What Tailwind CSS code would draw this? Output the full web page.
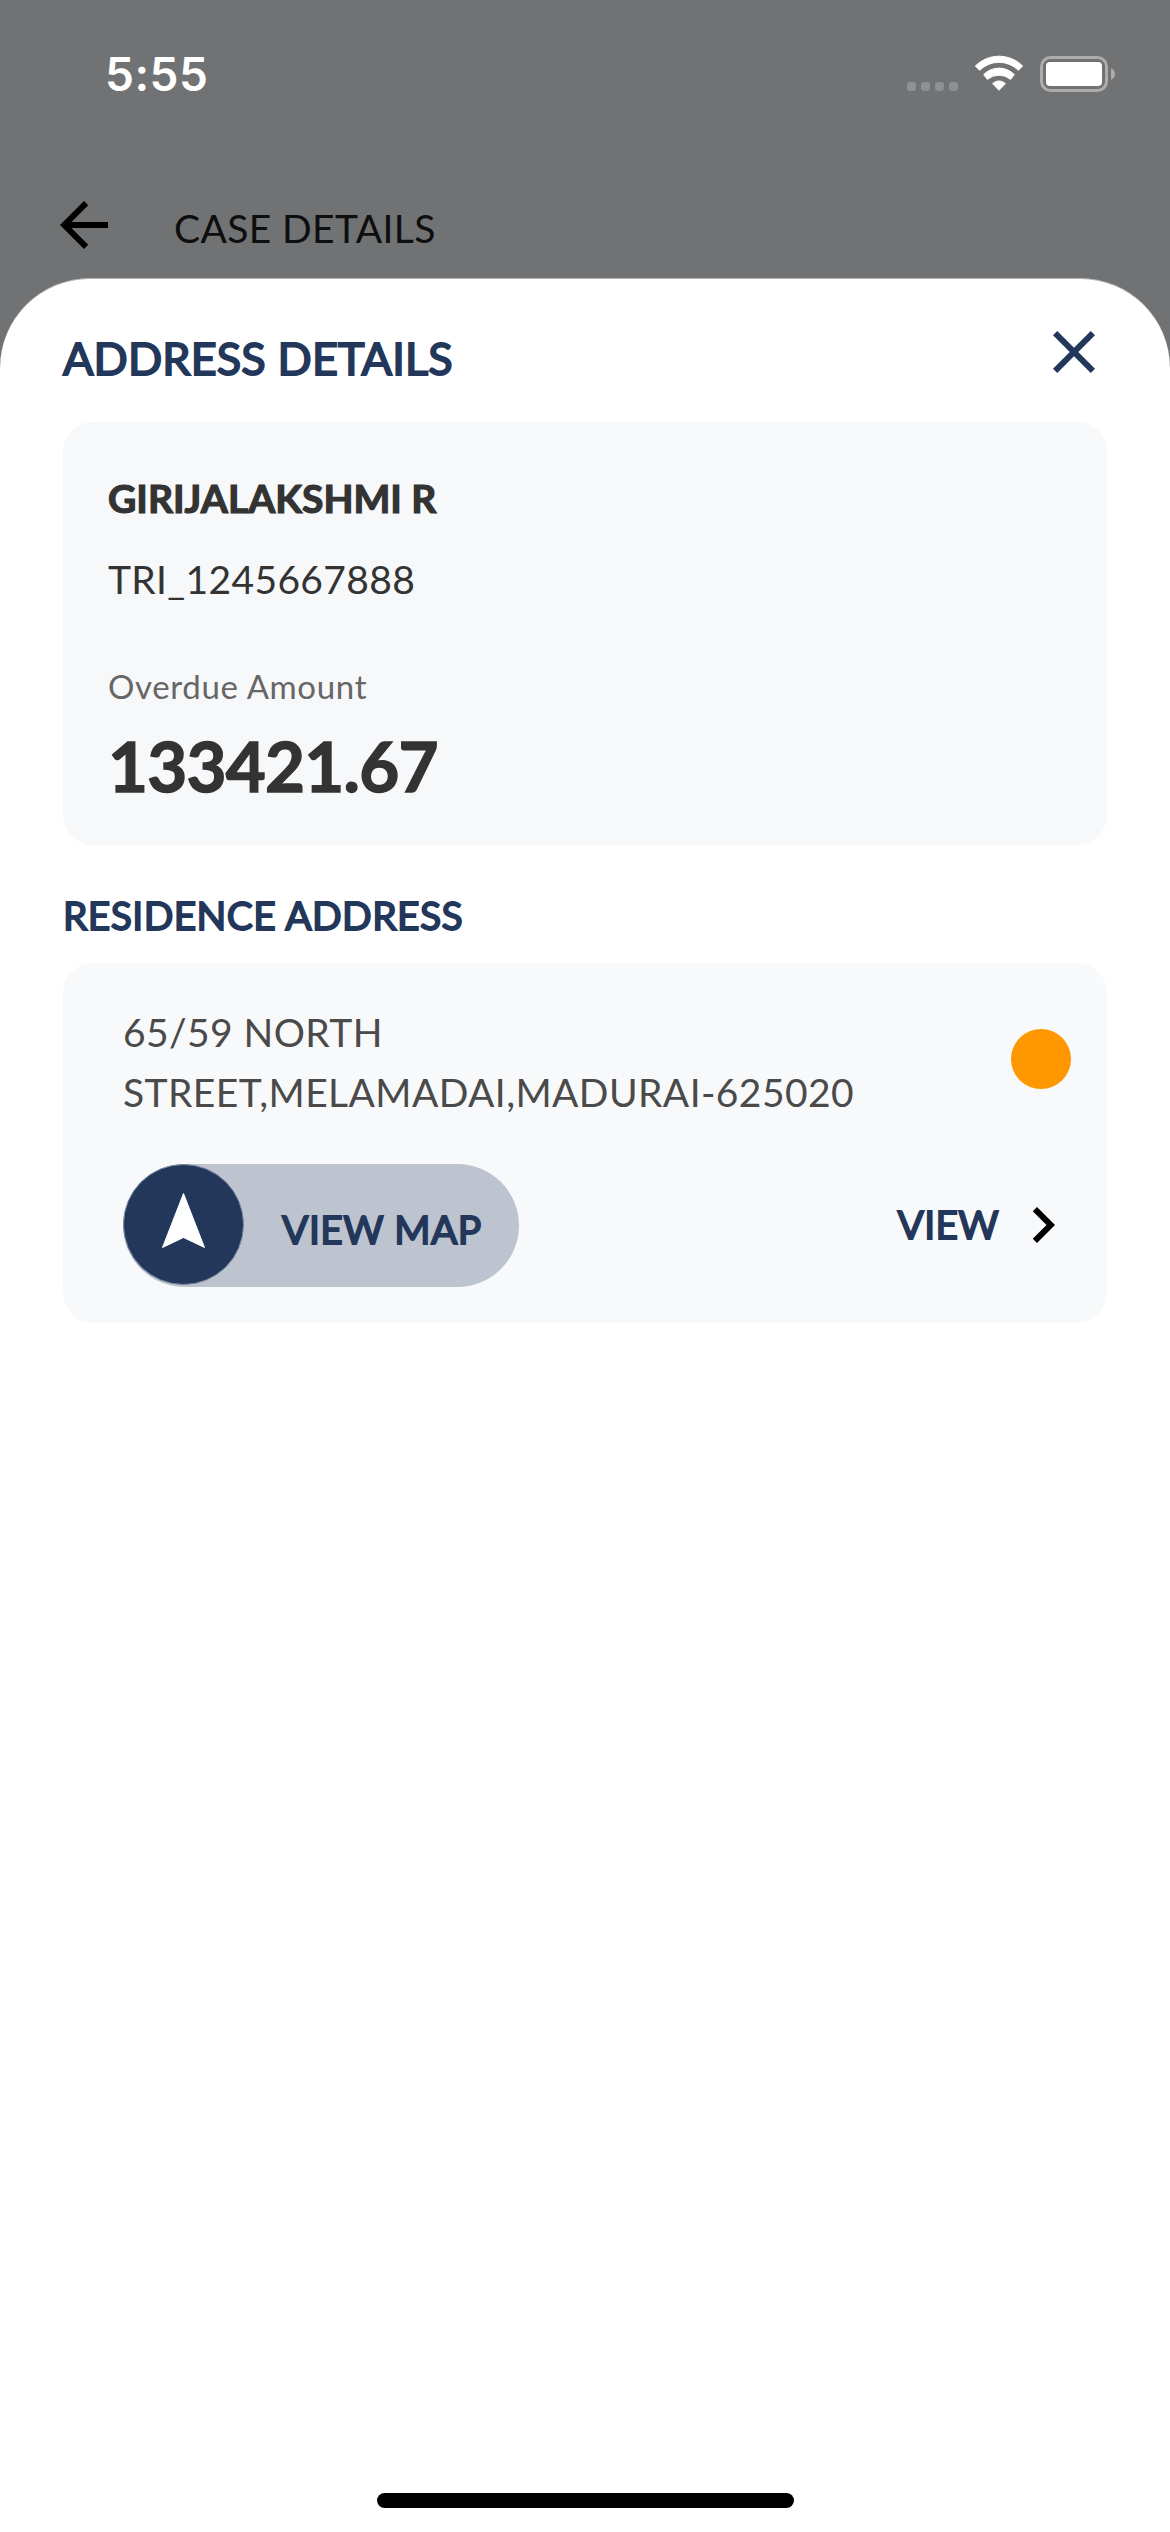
<!DOCTYPE html>
<html lang="en">
<head>
<meta charset="utf-8">
<title>Address Details</title>
<script src="https://cdn.jsdelivr.net/npm/@tailwindcss/browser@4"></script>
</head>
<body class="bg-[#717274]">
<div class="flex h-[2532px] w-[1170px] flex-col overflow-hidden bg-[#717274] font-['Lato',sans-serif]">

  <!-- Status bar -->
  <div class="flex h-[141px] shrink-0 items-start justify-between pl-[105px] pr-[54px]">
    <span class="mt-[44px] text-[46px] leading-[60px] font-semibold tracking-[0.5px] text-white font-['Inter',sans-serif]">5:55</span>
    <svg class="mt-[50px]" width="210" height="46" viewBox="906 50 210 46">
      <g fill="#8f9092">
        <rect x="907" y="82" width="9" height="9" rx="3"/><rect x="921" y="82" width="9" height="9" rx="3"/>
        <rect x="935" y="82" width="9" height="9" rx="3"/><rect x="949" y="82" width="9" height="9" rx="3"/>
      </g>
      <g fill="#fff" stroke="#fff" stroke-width="1" stroke-linejoin="round">
        <path d="M975.3 66A33.4 33.4 0 0 1 1022.7 66L1018.4 70.3A27.6 27.6 0 0 0 979.6 70.3Z"/>
        <path d="M983.7 74.6A21.3 21.3 0 0 1 1014.3 74.6L1010.6 79.4A18 18 0 0 0 987.4 79.4Z"/>
        <path d="M992.6 83.6A9 9 0 0 1 1005.4 83.6L999 90.3Z"/>
      </g>
      <rect x="1041.5" y="57.5" width="65" height="33" rx="9" fill="none" stroke="#acacac" stroke-width="3"/>
      <rect x="1046" y="62" width="56" height="24" rx="4" fill="#fff"/>
      <path d="M1111 68.3C1113.6 69.2 1115 71.5 1115 74S1113.6 78.8 1111 79.7Z" fill="#acacac"/>
    </svg>
  </div>

  <!-- Dimmed page header -->
  <div class="flex h-[137px] shrink-0 items-start pl-[48px] pt-[48px]">
    <svg width="72" height="72" viewBox="0 0 24 24"><path d="M20 11H7.83l5.59-5.59L12 4l-8 8 8 8 1.41-1.41L7.83 13H20z"/></svg>
    <span class="mt-[9px] ml-[54px] text-[39px] leading-[60px] tracking-[0.38px] text-[#0e0e0f]">CASE DETAILS</span>
  </div>

  <!-- Bottom sheet -->
  <div class="flex min-h-0 flex-1 flex-col rounded-t-[90px] border-t border-[#b4b5b6] bg-white px-[63px]">
    <div class="flex h-[143px] shrink-0 items-start justify-between">
      <h1 class="mt-[49px] text-[45px] leading-[60px] tracking-[0.14px] text-[#23375a] [-webkit-text-stroke:1.9px_#23375a]">ADDRESS DETAILS</h1>
      <svg class="mt-[37px] -mr-[3px]" width="72" height="72" viewBox="0 0 24 24" fill="#23375a"><path d="M19 6.41 17.59 5 12 10.59 6.41 5 5 6.41 10.59 12 5 17.59 6.41 19 12 13.41 17.59 19 19 17.59 13.41 12z"/></svg>
    </div>

    <section class="flex h-[423px] shrink-0 flex-col rounded-[30px] bg-[#f7f8fa] px-[45px] pt-[46px] text-[#333]">
      <p class="text-[39px] leading-[60px] font-bold [-webkit-text-stroke:1.2px_#333]">GIRIJALAKSHMI R</p>
      <p class="mt-[21px] text-[39px] leading-[60px] tracking-[0.33px]">TRI_1245667888</p>
      <p class="mt-[57px] text-[33px] leading-[40px] tracking-[0.66px] text-[#666]">Overdue Amount</p>
      <p class="mt-[20px] text-[69px] leading-[80px] font-bold tracking-[-0.75px] [-webkit-text-stroke:1.4px_#333]">133421.67</p>
    </section>

    <h2 class="mt-[40px] shrink-0 text-[39px] leading-[60px] tracking-[0.4px] text-[#23375a] [-webkit-text-stroke:1.8px_#23375a]">RESIDENCE ADDRESS</h2>

    <section class="mt-[18px] flex h-[360px] shrink-0 flex-col rounded-[30px] bg-[#f8f9fb] pl-[60px] pr-[36px] pt-[39px]">
      <div class="flex items-start justify-between">
        <p class="text-[39px] leading-[60px] tracking-[0.4px] text-[#4a4a4a]">65/59 NORTH<br>STREET,MELAMADAI,MADURAI-625020</p>
        <span class="mt-[27px] h-[60px] w-[60px] rounded-full bg-[#ff9800]"></span>
      </div>
      <div class="mt-[42px] flex h-[123px] items-start justify-between">
        <div class="flex h-[123px] w-[396px] items-start rounded-[61.5px] bg-[#bdc3cf]">
          <svg width="121" height="121" viewBox="0 0 121 121"><circle cx="60.5" cy="60.5" r="60" fill="#23375a" stroke="#7d8aa1" stroke-width="1"/><path d="M60.5 29.5L39.5 83.5 60.5 73.5 81.5 83.5Z" fill="#fff" stroke="#fff" stroke-width="1" stroke-linejoin="round"/></svg>
          <span class="mt-[35px] ml-[38px] text-[39px] leading-[60px] tracking-[0.5px] text-[#23375a] [-webkit-text-stroke:1.8px_#23375a]">VIEW MAP</span>
        </div>
        <div class="-mr-[8px] flex items-start">
          <span class="mt-[30px] w-[109.5px] text-[39px] leading-[60px] tracking-[0.3px] text-[#23375a] [-webkit-text-stroke:1.8px_#23375a]">VIEW</span>
          <svg class="mt-[25px]" width="72" height="72" viewBox="0 0 24 24"><path d="M8.59 16.58 13.17 12 8.59 7.41 10 6l6 6-6 6z"/></svg>
        </div>
      </div>
    </section>

    <!-- Home indicator -->
    <div class="mt-auto mb-[24px] h-[15px] w-[417px] self-center rounded-full bg-black"></div>
  </div>
</div>
</body>
</html>
